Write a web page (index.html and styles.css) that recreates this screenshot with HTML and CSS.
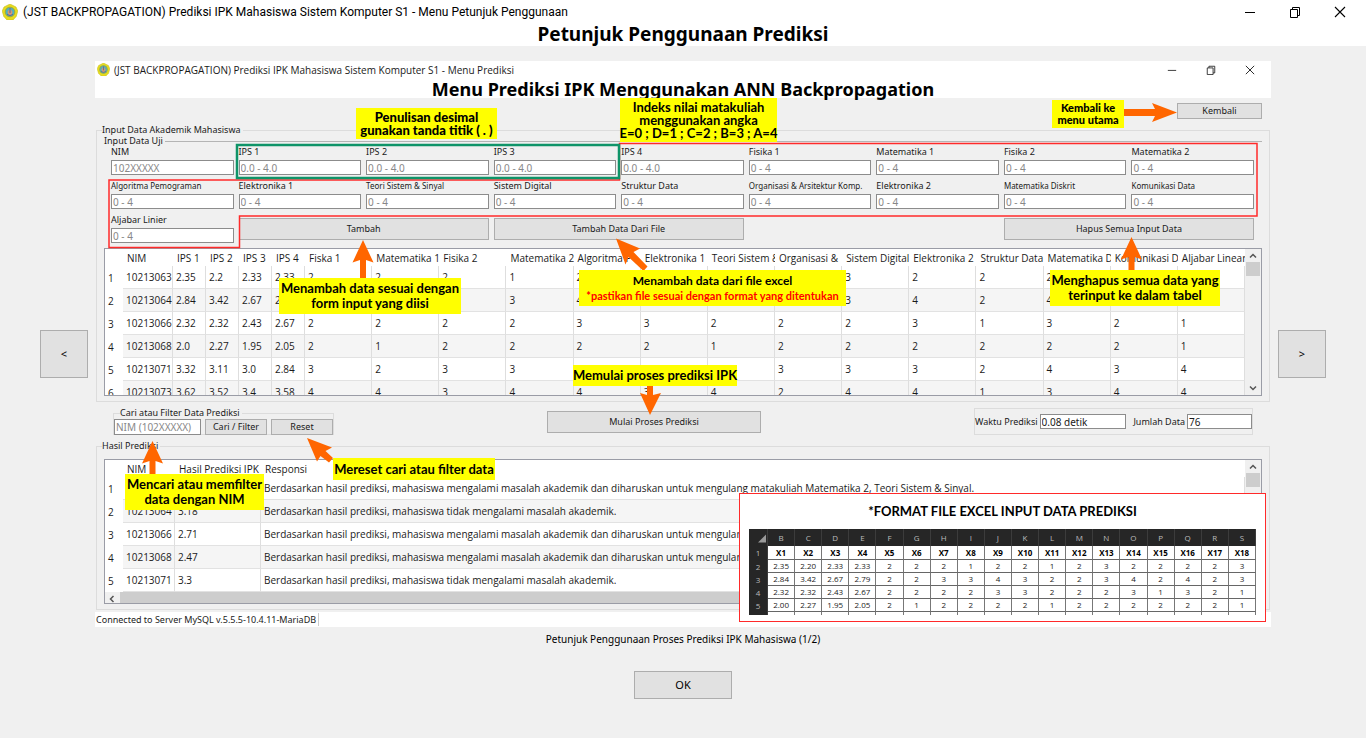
FILE: index.html
```html
<!DOCTYPE html>
<html lang="id">
<head>
<meta charset="utf-8">
<title>Menu Petunjuk Penggunaan</title>
<link rel="stylesheet" href="styles.css">
</head>
<body>
<svg class="defs" aria-hidden="true">
  <symbol id="logo" viewBox="0 0 16 16">
    <path d="M8 0 14 3 15.800 7 14.200 12.500 11 16H5L1.800 12.500.2 7 2 3Z" fill="#e8dc1c" stroke="#c3bd20" stroke-width=".6"/>
    <circle cx="8" cy="8" r="4.800" fill="#4fb0c0" stroke="#a0a83a"/>
    <path d="M8 4 10.500 8 9.500 11.500H6.500L5.500 8Z" fill="#d59a72"/>
    <path d="M8 4v5M5 10.500q3 2 6 0" fill="none" stroke="#54689a"/>
  </symbol>
  <symbol id="min" viewBox="0 0 12 12"><path d="M1 6.500h10" stroke="currentColor"/></symbol>
  <symbol id="max" viewBox="0 0 12 12"><path d="M1.500 3.500h7v8h-7zM3.500 3.500v-2h7v8h-2" fill="none" stroke="currentColor"/></symbol>
  <symbol id="close" viewBox="0 0 12 12"><path d="M1 1 11 11M11 1 1 11" stroke="currentColor" stroke-width="1.100"/></symbol>
</svg>

<header class="window-head">
  <div class="titlebar">
    <svg class="logo"><use href="#logo"/></svg>
    <span class="window-name">(JST BACKPROPAGATION) Prediksi IPK Mahasiswa Sistem Komputer S1 - Menu Petunjuk Penggunaan</span>
    <div class="controls">
      <button aria-label="Minimize"><svg><use href="#min"/></svg></button>
      <button aria-label="Restore"><svg><use href="#max"/></svg></button>
      <button aria-label="Close"><svg><use href="#close"/></svg></button>
    </div>
  </div>
  <h1>Petunjuk Penggunaan Prediksi</h1>
</header>

<main class="viewer">
  <button class="btn nav">&lt;</button>
  <figure class="guide">
    <div class="guide-head">
      <div class="titlebar">
        <svg class="logo"><use href="#logo"/></svg>
        <span class="window-name">(JST BACKPROPAGATION) Prediksi IPK Mahasiswa Sistem Komputer S1 - Menu Prediksi</span>
        <div class="controls">
          <button aria-label="Minimize"><svg><use href="#min"/></svg></button>
          <button aria-label="Restore"><svg><use href="#max"/></svg></button>
          <button aria-label="Close"><svg><use href="#close"/></svg></button>
        </div>
      </div>
      <h2>Menu Prediksi IPK Menggunakan ANN Backpropagation</h2>
    </div>
    <div class="back-row"><button class="btn back">Kembali</button></div>

    <fieldset class="group">
      <legend>Input Data Akademik Mahasiswa</legend>
      <fieldset class="inputs">
        <legend>Input Data Uji</legend>
        <div class="form">
          <label>NIM<input placeholder="102XXXXX"></label>
          <label>IPS 1<input placeholder="0.0 - 4.0"></label>
          <label>IPS 2<input placeholder="0.0 - 4.0"></label>
          <label>IPS 3<input placeholder="0.0 - 4.0"></label>
          <label>IPS 4<input placeholder="0.0 - 4.0"></label>
          <label>Fisika 1<input placeholder="0 - 4"></label>
          <label>Matematika 1<input placeholder="0 - 4"></label>
          <label>Fisika 2<input placeholder="0 - 4"></label>
          <label>Matematika 2<input placeholder="0 - 4"></label>
          <label class="small">Algoritma Pemograman<input placeholder="0 - 4"></label>
          <label>Elektronika 1<input placeholder="0 - 4"></label>
          <label class="small">Teori Sistem &amp; Sinyal<input placeholder="0 - 4"></label>
          <label>Sistem Digital<input placeholder="0 - 4"></label>
          <label>Struktur Data<input placeholder="0 - 4"></label>
          <label class="small">Organisasi &amp; Arsitektur Komp.<input placeholder="0 - 4"></label>
          <label>Elektronika 2<input placeholder="0 - 4"></label>
          <label class="small">Matematika Diskrit<input placeholder="0 - 4"></label>
          <label class="small">Komunikasi Data<input placeholder="0 - 4"></label>
          <label>Aljabar Linier<input placeholder="0 - 4"></label>
          <button class="btn wide">Tambah</button>
          <button class="btn wide">Tambah Data Dari File</button>
          <button class="btn wide last">Hapus Semua Input Data</button>
        </div>
      </fieldset>
      <div class="grid-box">
        <div class="grid-view">
          <table class="grid">
            <colgroup><col class="c-no"><col class="c-nim"><col class="c-ips"><col class="c-ips"><col class="c-ips"><col class="c-ips"><col span="14"></colgroup>
            <thead><tr><th></th><th>NIM</th><th>IPS 1</th><th>IPS 2</th><th>IPS 3</th><th>IPS 4</th><th>Fiska 1</th><th>Matematika 1</th><th>Fisika 2</th><th>Matematika 2</th><th>Algoritma P</th><th>Elektronika 1</th><th>Teori Sistem &amp;</th><th>Organisasi &amp;</th><th>Sistem Digital</th><th>Elektronika 2</th><th>Struktur Data</th><th>Matematika D</th><th>Komunikasi D</th><th>Aljabar Linear</th></tr></thead>
            <tbody>
              <tr><th>1</th><td>10213063</td><td>2.35</td><td>2.2</td><td>2.33</td><td>2.33</td><td>2</td><td>2</td><td>2</td><td>1</td><td>2</td><td>2</td><td>1</td><td>2</td><td>3</td><td>2</td><td>2</td><td>2</td><td>2</td><td>3</td></tr>
              <tr><th>2</th><td>10213064</td><td>2.84</td><td>3.42</td><td>2.67</td><td>2.79</td><td>2</td><td>2</td><td>3</td><td>3</td><td>4</td><td>3</td><td>2</td><td>2</td><td>3</td><td>4</td><td>2</td><td>4</td><td>2</td><td>3</td></tr>
              <tr><th>3</th><td>10213066</td><td>2.32</td><td>2.32</td><td>2.43</td><td>2.67</td><td>2</td><td>2</td><td>2</td><td>2</td><td>3</td><td>3</td><td>2</td><td>2</td><td>2</td><td>3</td><td>1</td><td>3</td><td>2</td><td>1</td></tr>
              <tr><th>4</th><td>10213068</td><td>2.0</td><td>2.27</td><td>1.95</td><td>2.05</td><td>2</td><td>1</td><td>2</td><td>2</td><td>2</td><td>2</td><td>1</td><td>2</td><td>2</td><td>2</td><td>2</td><td>2</td><td>2</td><td>1</td></tr>
              <tr><th>5</th><td>10213071</td><td>3.32</td><td>3.11</td><td>3.0</td><td>2.84</td><td>3</td><td>2</td><td>3</td><td>3</td><td>3</td><td>3</td><td>3</td><td>3</td><td>3</td><td>3</td><td>2</td><td>4</td><td>3</td><td>4</td></tr>
              <tr><th>6</th><td>10213073</td><td>3.62</td><td>3.52</td><td>3.4</td><td>3.58</td><td>4</td><td>4</td><td>3</td><td>4</td><td>4</td><td>3</td><td>4</td><td>2</td><td>4</td><td>4</td><td>1</td><td>3</td><td>4</td><td>4</td></tr>
            </tbody>
          </table>
        </div>
        <div class="vscroll">
          <svg viewBox="0 0 8 8"><path d="M1 5.500 4 2.500 7 5.500" /></svg>
          <i></i>
          <svg class="down" viewBox="0 0 8 8"><path d="M1 2.500 4 5.500 7 2.500"/></svg>
        </div>
      </div>
    </fieldset>

    <div class="actions">
      <fieldset class="filter">
        <legend>Cari atau Filter Data Prediksi</legend>
        <input aria-label="NIM" placeholder="NIM (102XXXXX)">
        <button class="btn">Cari / Filter</button>
        <button class="btn">Reset</button>
      </fieldset>
      <button class="btn run">Mulai Proses Prediksi</button>
      <div class="stats">
        <label>Waktu Prediksi <input class="time" value="0.08 detik"></label>
        <label>Jumlah Data <input class="count" value="76"></label>
      </div>
    </div>

    <fieldset class="group result">
      <legend>Hasil Prediksi</legend>
      <div class="grid-box">
        <div class="grid-view">
          <table class="grid">
            <colgroup><col class="c-no"><col class="c-id"><col class="c-ipk"><col></colgroup>
            <thead><tr><th></th><th>NIM</th><th>Hasil Prediksi IPK</th><th>Responsi</th></tr></thead>
            <tbody>
              <tr><th>1</th><td>10213063</td><td>2.35</td><td>Berdasarkan hasil prediksi, mahasiswa mengalami masalah akademik dan diharuskan untuk mengulang matakuliah Matematika 2, Teori Sistem &amp; Sinyal.</td></tr>
              <tr><th>2</th><td>10213064</td><td>3.18</td><td>Berdasarkan hasil prediksi, mahasiswa tidak mengalami masalah akademik.</td></tr>
              <tr><th>3</th><td>10213066</td><td>2.71</td><td>Berdasarkan hasil prediksi, mahasiswa mengalami masalah akademik dan diharuskan untuk mengulang matakuliah</td></tr>
              <tr><th>4</th><td>10213068</td><td>2.47</td><td>Berdasarkan hasil prediksi, mahasiswa mengalami masalah akademik dan diharuskan untuk mengulang matakuliah</td></tr>
              <tr><th>5</th><td>10213071</td><td>3.3</td><td>Berdasarkan hasil prediksi, mahasiswa tidak mengalami masalah akademik.</td></tr>
            </tbody>
          </table>
          <div class="hscroll"><svg viewBox="0 0 8 8"><path d="M5.500 1 2.500 4 5.500 7"/></svg><i></i></div>
        </div>
        <div class="vscroll">
          <svg viewBox="0 0 8 8"><path d="M1 5.500 4 2.500 7 5.500"/></svg>
          <i></i>
        </div>
      </div>
    </fieldset>
    <div class="status"><span>Connected to Server MySQL v.5.5.5-10.4.11-MariaDB</span></div>

    <svg class="marks" aria-hidden="true">
      <path class="red" d="M524.500 82.500H1162V155H144.500V186.500H14V119H524.500Z"/>
      <rect class="green" x="142" y="84" width="382" height="33"/>
      <path d="M1029 48h31l-3-6 25 9.500-25 9.500 3-6h-31z"/>
      <path d="M268 179 278.500 201.500 271 199V218h-6V199L257.500 201.500Z"/>
      <path d="M521 177.500 545 187.500 538.500 191 552.500 205.500 548.500 210 533.500 196 530.500 203.500Z"/>
      <path d="M1036.500 176 1047 198.500 1039.500 196V210h-6V196L1026 198.500Z"/>
      <path d="M552 324h6v10l8-2L555 354 545 332l7 2Z"/>
      <path d="M57.500 380 68 402.500 60.500 400V414h-6V400L47 402.500Z"/>
      <path d="M212 377 237 386.500 230.500 390 238 397 234 401.500 225.500 395 222 400.500Z"/>
    </svg>
    <div class="note stretched n-decimal">Penulisan desimal<br>gunakan tanda titik ( . )</div>
    <div class="note n-index">Indeks nilai matakuliah<br>menggunakan angka<br>E=0 ; D=1 ; C=2 ; B=3 ; A=4</div>
    <div class="note tiny n-back">Kembali ke<br>menu utama</div>
    <div class="note n-add">Menambah data sesuai dengan<br>form input yang diisi</div>
    <div class="note n-file">Menambah data dari file excel<br><em>*pastikan file sesuai dengan format yang ditentukan</em></div>
    <div class="note n-clear">Menghapus semua data yang<br>terinput ke dalam tabel</div>
    <div class="note n-run">Memulai proses prediksi IPK</div>
    <div class="note n-find">Mencari atau memfilter<br>data dengan NIM</div>
    <div class="note n-reset">Mereset cari atau filter data</div>

    <section class="format">
      <h3>*FORMAT FILE EXCEL INPUT DATA PREDIKSI</h3>
      <table class="sheet">
        <colgroup><col class="c-row"><col span="18"></colgroup>
        <thead><tr><th><svg viewBox="0 0 10 10"><path d="M10 0V10H0Z"/></svg></th><th>B</th><th>C</th><th>D</th><th>E</th><th>F</th><th>G</th><th>H</th><th>I</th><th>J</th><th>K</th><th>L</th><th>M</th><th>N</th><th>O</th><th>P</th><th>Q</th><th>R</th><th>S</th></tr></thead>
        <tbody>
          <tr class="names"><th>1</th><td>X1</td><td>X2</td><td>X3</td><td>X4</td><td>X5</td><td>X6</td><td>X7</td><td>X8</td><td>X9</td><td>X10</td><td>X11</td><td>X12</td><td>X13</td><td>X14</td><td>X15</td><td>X16</td><td>X17</td><td>X18</td></tr>
          <tr><th>2</th><td>2.35</td><td>2.20</td><td>2.33</td><td>2.33</td><td>2</td><td>2</td><td>2</td><td>1</td><td>2</td><td>2</td><td>1</td><td>2</td><td>3</td><td>2</td><td>2</td><td>2</td><td>2</td><td>3</td></tr>
          <tr><th>3</th><td>2.84</td><td>3.42</td><td>2.67</td><td>2.79</td><td>2</td><td>2</td><td>3</td><td>3</td><td>4</td><td>3</td><td>2</td><td>2</td><td>3</td><td>4</td><td>2</td><td>4</td><td>2</td><td>3</td></tr>
          <tr><th>4</th><td>2.32</td><td>2.32</td><td>2.43</td><td>2.67</td><td>2</td><td>2</td><td>2</td><td>2</td><td>3</td><td>3</td><td>2</td><td>2</td><td>2</td><td>3</td><td>1</td><td>3</td><td>2</td><td>1</td></tr>
          <tr><th>5</th><td>2.00</td><td>2.27</td><td>1.95</td><td>2.05</td><td>2</td><td>1</td><td>2</td><td>2</td><td>2</td><td>2</td><td>1</td><td>2</td><td>2</td><td>2</td><td>2</td><td>2</td><td>2</td><td>1</td></tr>
          <tr class="stub"><th></th><td></td><td></td><td></td><td></td><td></td><td></td><td></td><td></td><td></td><td></td><td></td><td></td><td></td><td></td><td></td><td></td><td></td><td></td></tr>
        </tbody>
      </table>
    </section>
  </figure>
  <button class="btn nav">&gt;</button>
</main>

<footer class="foot">
  <p>Petunjuk Penggunaan Proses Prediksi IPK Mahasiswa (1/2)</p>
  <button class="btn ok">OK</button>
</footer>
</body>
</html>
```
FILE: styles.css
```css
* { box-sizing: border-box; }
body { margin: 0; background: #f0f0f0; color: #000; font: 11px/12px "Noto Sans", sans-serif; }
h1, h2, h3, p, figure { margin: 0; }
button, input { font: inherit; color: inherit; margin: 0; padding: 0; border-radius: 0; }
fieldset { margin: 0; padding: 0; border: 1px solid #dcdcdc; min-width: 0; }
legend { padding: 0 2px 0 0; }
.defs { display: none; }

.btn { background: #e1e1e1; border: 1px solid #adadad; text-align: center; white-space: nowrap; }

/* outer window */
.window-head { background: #fff; height: 46px; }
.titlebar { display: flex; align-items: center; white-space: nowrap; }
.window-head .titlebar { height: 23px; padding: 0 4px 0 2px; font-family: Roboto, sans-serif; font-size: 12px; gap: 5px; }
.logo { width: 16px; height: 16px; flex: none; }
.controls { display: flex; margin-left: auto; }
.controls button { display: flex; align-items: center; justify-content: center; width: 45px; height: 20px; background: none; border: 0; }
.controls svg { width: 12px; height: 12px; }
h1 { font-size: 19px; line-height: 23px; text-align: center; }

.viewer { display: flex; align-items: center; gap: 7px; padding: 15px 40px 0; }
.nav { flex: none; width: 48px; height: 48px; margin-top: 20px; }
.guide { position: relative; flex: 1; min-width: 0; font-size: 9px; color: #1a1a1a; }

/* illustrated window */
.guide-head { background: #fff; height: 37px; }
.guide .titlebar { height: 17px; padding: 0 2px; font-family: "Open Sans", sans-serif; font-size: 10px; gap: 4px; }
.guide .logo { width: 13px; height: 13px; }
.guide .controls button { width: 39px; height: 16px; }
.guide .controls svg { width: 10px; height: 10px; }
h2 { font-size: 18px; line-height: 22px; text-align: center; color: #000; }
.back-row { display: flex; justify-content: flex-end; height: 26px; padding: 5px 9px; }
.back { width: 85px; height: 16px; }

.group { margin: 0 1px; padding: 0 7px 5px; }
.group > legend { margin-left: -2px; }
.inputs { border: 0; border-top: 1px solid #b4b4b4; }
.inputs legend { line-height: 10px; }
.form { display: grid; grid-template-columns: repeat(9, 1fr); gap: 5px; padding: 0 8px 5px 7px; }
.form label { display: flex; flex-direction: column; gap: 2px; white-space: nowrap; min-width: 0; }
.form .small { font-size: 8px; }
.guide input { width: 100%; height: 15px; padding: 0 1px; background: #fff; border: 1px solid #8c8c8c; font-size: 10px; }
.guide input::placeholder { color: #888; opacity: 1; }
.wide { grid-column: span 2; align-self: end; height: 22px; margin-bottom: 3px; }
.wide.last { grid-column: 8 / span 2; }

.grid-box { display: flex; height: 148px; background: #fff; border: 1px solid #9a9ca6; }
.grid-view { flex: 1; min-width: 0; overflow: hidden; }
.grid { width: 100%; table-layout: fixed; border-collapse: separate; border-spacing: 0; font: 10px/12px "Open Sans", sans-serif; }
.grid th, .grid td { padding: 0 0 0 3px; text-align: left; font-weight: 400; white-space: nowrap; overflow: hidden; }
.grid thead th { height: 17px; padding: 0 1px 0 4px; }
.grid tbody tr { height: 23px; }
.grid td { border-right: 1px solid #dedede; border-bottom: 1px solid #e2e2e2; }
.grid tbody tr:nth-child(even) td { background: #f5f5f5; }
.c-no { width: 18px; }
.c-nim { width: 50px; }
.c-ips { width: 33px; }
.c-id { width: 52px; }
.c-ipk { width: 86px; }

.vscroll { flex: none; display: flex; flex-direction: column; align-items: center; width: 16px; padding: 3px 1px; background: #f0f0f0; }
.vscroll svg, .hscroll svg { width: 8px; height: 8px; fill: none; stroke: #555; stroke-width: 1.500; }
.vscroll i { width: 100%; height: 14px; margin-top: 2px; background: #cdcdcd; }
.vscroll .down { margin-top: auto; }
.hscroll { display: flex; align-items: center; height: 13px; gap: 4px; padding-left: 3px; background: #f0f0f0; }
.hscroll i { flex: 1; height: 100%; background: #cdcdcd; }

.actions { display: flex; justify-content: space-between; padding: 5px 18px; }
.filter { display: flex; gap: 4px; width: 221px; height: 28px; margin-bottom: -5px; }
.filter legend { margin-left: 6px; }
.filter input { width: 87px; height: 16px; flex: none; }
.filter .btn { flex: 1; height: 16px; }
.run { width: 214px; height: 22px; margin-top: 4px; }
.stats { display: flex; align-items: center; justify-content: space-between; width: 279px; height: 27px; margin-top: 1px; border: 1px solid #dcdcdc; }
.stats label { display: flex; align-items: center; gap: 2px; white-space: nowrap; }
.guide .time { width: 86px; }
.guide .count { width: 65px; }

.result .grid-box { height: 145px; margin-top: 7px; }
.status { height: 15px; margin-top: 2px; padding-left: 1px; background: #fff; line-height: 15px; }
.status span { padding-right: 2px; border-right: 1px solid #ccc; }

/* annotations over the illustrated window */
.marks { position: absolute; inset: 0; width: 100%; height: 100%; fill: #f60; pointer-events: none; }
.marks .red { fill: none; stroke: #ff2a2a; stroke-width: 1.500; }
.marks .green { fill: none; stroke: #0f9468; stroke-width: 2.500; }
.note { position: absolute; display: grid; place-content: center; background: #ff0; color: #000; font: 700 13px/15px Lato, sans-serif; text-align: center; white-space: nowrap; }
.note em { color: red; font-size: 11px; font-style: normal; }
.stretched { font-weight: 900; line-height: 13px; }
.tiny { font-size: 11px; line-height: 12px; font-weight: 900; }
.n-decimal { left: 261px; top: 47px; width: 141px; height: 31px; }
.n-index { left: 525px; top: 37px; width: 157px; height: 44px; line-height: 13px; }
.n-back { left: 957px; top: 39px; width: 72px; height: 28px; }
.n-add { left: 184px; top: 217px; width: 182px; height: 36px; }
.n-file { left: 484px; top: 209px; width: 267px; height: 36px; font-size: 12px; }
.n-clear { left: 955px; top: 209px; width: 170px; height: 36px; }
.n-run { left: 478px; top: 304px; width: 164px; height: 21px; }
.n-find { left: 30px; top: 413px; width: 139px; height: 36px; }
.n-reset { left: 238px; top: 397px; width: 162px; height: 22px; }

.format { position: absolute; right: 5px; bottom: 5px; width: 527px; height: 129px; padding: 9px; background: #fff; border: 1px solid #ff2a2a; }
h3 { font: 700 13px/16px Lato, sans-serif; text-align: center; color: #000; }
.sheet { width: 507px; margin-top: 10px; table-layout: fixed; border-collapse: separate; border-spacing: 0; font: 8px/12px "Open Sans", sans-serif; }
.sheet th, .sheet td { padding: 0; height: 13px; text-align: center; font-weight: 400; }
.sheet th { background: #262626; color: #bbb; border-right: 1px solid #3c3c3c; }
.sheet thead th { height: 17px; }
.sheet thead svg { display: block; width: 8px; height: 9px; margin: 2px 1px 0 auto; fill: #999; }
.sheet td { border-right: 1px solid #777; border-bottom: 1px solid #666; }
.sheet .names td { height: 14px; font-weight: 700; color: #000; }
.sheet .stub th, .sheet .stub td { height: 3px; border-bottom: 0; }
.c-row { width: 19px; }

.foot { display: flex; flex-direction: column; align-items: center; gap: 25px; padding-top: 6px; }
.foot p { font-size: 10px; line-height: 13px; }
.ok { width: 98px; height: 28px; }
```
